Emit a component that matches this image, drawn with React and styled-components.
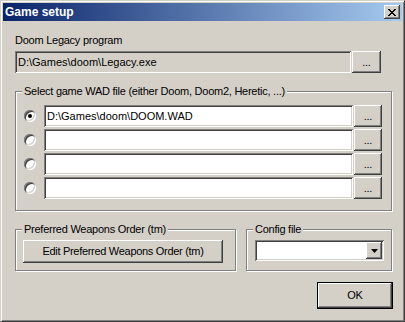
import React from "react";
import styled, { createGlobalStyle, css } from "styled-components";

const GlobalStyle = createGlobalStyle`
  html, body { margin: 0; padding: 0; background: #d4d0c8; }
  body { font-family: "Liberation Sans", Arial, sans-serif; font-size: 11px; color: #000; }
  * { box-sizing: border-box; }
`;

const raised = css`
  box-shadow: inset -1px -1px #404040, inset 1px 1px #fff, inset -2px -2px #808080,
    inset 2px 2px #d4d0c8;
`;

const sunken = css`
  box-shadow: inset 1px 1px #808080, inset -1px -1px #fff, inset 2px 2px #404040,
    inset -2px -2px #d4d0c8;
`;

const Window = styled.div`
  width: 405px;
  height: 322px;
  background: #d4d0c8;
  border: 1px solid;
  border-color: #d4d0c8 #404040 #404040 #d4d0c8;
  box-shadow: inset 1px 1px #fff, inset -1px -1px #808080;
  padding: 2px;
  display: flex;
  flex-direction: column;
  overflow: hidden;
`;

const TitleBar = styled.div`
  height: 18px;
  flex: none;
  display: flex;
  align-items: center;
  justify-content: space-between;
  padding: 0 2px 0 2px;
  background: linear-gradient(to right, #0a246a, #a6caf0);
`;

const Title = styled.span`
  color: #fff;
  font-weight: bold;
  font-size: 12px;
  line-height: 14px;
`;

const CloseButton = styled.button`
  width: 16px;
  height: 14px;
  padding: 0;
  border: none;
  background: #d4d0c8;
  ${raised};
  display: flex;
  align-items: center;
  justify-content: center;
`;

const Body = styled.div`
  flex: 1;
  display: flex;
  flex-direction: column;
  padding: 13px 10px 0 12px;
`;

const Label = styled.div`
  line-height: 13px;
  margin-bottom: 4px;
  letter-spacing: -0.25px;
`;

const FieldRow = styled.div`
  display: flex;
  align-items: center;
  gap: 1px;
  height: 22px;
  margin-right: ${(p) => p.$inset || 0}px;
`;

const Field = styled.div`
  flex: 1;
  height: ${(p) => p.$h || 22}px;
  background: ${(p) => (p.$readOnly ? "#d4d0c8" : "#fff")};
  ${sunken};
  padding: 0 3px;
  display: flex;
  align-items: center;
  justify-content: space-between;
  white-space: nowrap;
  overflow: hidden;
`;

const Button = styled.button`
  flex: none;
  width: ${(p) => p.$w}px;
  height: ${(p) => p.$h}px;
  padding: 0;
  border: none;
  background: #d4d0c8;
  font: inherit;
  font-size: 11px;
  letter-spacing: -0.3px;
  color: #000;
  ${raised};
  display: flex;
  align-items: center;
  justify-content: center;
  line-height: 13px;
`;

const DefaultButton = styled(Button)`
  border: 1px solid #000;
  box-shadow: inset -1px -1px #404040, inset 1px 1px #fff, inset -2px -2px #808080;
`;

const Group = styled.div`
  position: relative;
  margin-top: ${(p) => p.$mt || 0}px;
  border: 1px solid #808080;
  box-shadow: inset 1px 1px #fff, 1px 1px #fff;
  padding: ${(p) => p.$pad};
  ${(p) => p.$w && `width: ${p.$w}px; flex: none;`}
  ${(p) => p.$grow && `flex: 1;`}
`;

const Legend = styled.span`
  position: absolute;
  top: -7px;
  left: 6px;
  padding: 0 2px;
  background: #d4d0c8;
  line-height: 13px;
  letter-spacing: -0.25px;
  white-space: nowrap;
`;

const WadList = styled.div`
  display: flex;
  flex-direction: column;
  gap: 2px;
`;

const Radio = styled.span`
  flex: none;
  width: 12px;
  height: 12px;
  margin-right: 7px;
  border-radius: 50%;
  background: #fff;
  ${sunken};
  display: flex;
  align-items: center;
  justify-content: center;
  &::after {
    content: "";
    width: 4px;
    height: 4px;
    border-radius: 50%;
    background: ${(p) => (p.$checked ? "#000" : "transparent")};
  }
`;

const BottomRow = styled.div`
  display: flex;
  gap: 10px;
  margin-top: 18px;
`;

const DropButton = styled.span`
  width: 16px;
  height: 17px;
  margin-right: -1px;
  background: #d4d0c8;
  ${raised};
  display: flex;
  align-items: center;
  justify-content: center;
`;

const OkRow = styled.div`
  display: flex;
  justify-content: flex-end;
  margin-top: 11px;
  margin-right: -1px;
`;

const wads = ["D:\\Games\\doom\\DOOM.WAD", "", "", ""];

export default function App() {
  return (
    <>
      <GlobalStyle />
      <Window>
        <TitleBar>
          <Title>Game setup</Title>
          <CloseButton aria-label="Close">
            <svg width="8" height="7" viewBox="0 0 8 7">
              <path d="M0 0h2v1h1v1h2v-1h1v-1h2v1h-1v1h-1v1h-1v1h1v1h1v1h1v1h-2v-1h-1v-1h-2v1h-1v1h-2v-1h1v-1h1v-1h1v-1h-1v-1h-1v-1h-1z" fill="#000" />
            </svg>
          </CloseButton>
        </TitleBar>
        <Body>
          <Label>Doom Legacy program</Label>
          <FieldRow $inset={11}>
            <Field $readOnly>D:\Games\doom\Legacy.exe</Field>
            <Button $w={29} $h={22}>...</Button>
          </FieldRow>

          <Group $mt={18} $pad="13px 9px 11px 8px">
            <Legend>Select game WAD file (either Doom, Doom2, Heretic, ...)</Legend>
            <WadList>
              {wads.map((w, i) => (
                <FieldRow key={i}>
                  <Radio $checked={i === 0} />
                  <Field>{w}</Field>
                  <Button $w={28} $h={22}>...</Button>
                </FieldRow>
              ))}
            </WadList>
          </Group>

          <BottomRow>
            <Group $w={221} $pad="10px 7px 7px 7px">
              <Legend>Preferred Weapons Order (tm)</Legend>
              <Button $w={200} $h={23}>Edit Preferred Weapons Order (tm)</Button>
            </Group>
            <Group $grow $pad="10px 7px 0 8px">
              <Legend>Config file</Legend>
              <Field $h={21}>
                <span />
                <DropButton>
                  <svg width="7" height="4" viewBox="0 0 7 4">
                    <path d="M0 0h7l-3.5 4z" fill="#000" />
                  </svg>
                </DropButton>
              </Field>
            </Group>
          </BottomRow>

          <OkRow>
            <DefaultButton $w={76} $h={27}>OK</DefaultButton>
          </OkRow>
        </Body>
      </Window>
    </>
  );
}
